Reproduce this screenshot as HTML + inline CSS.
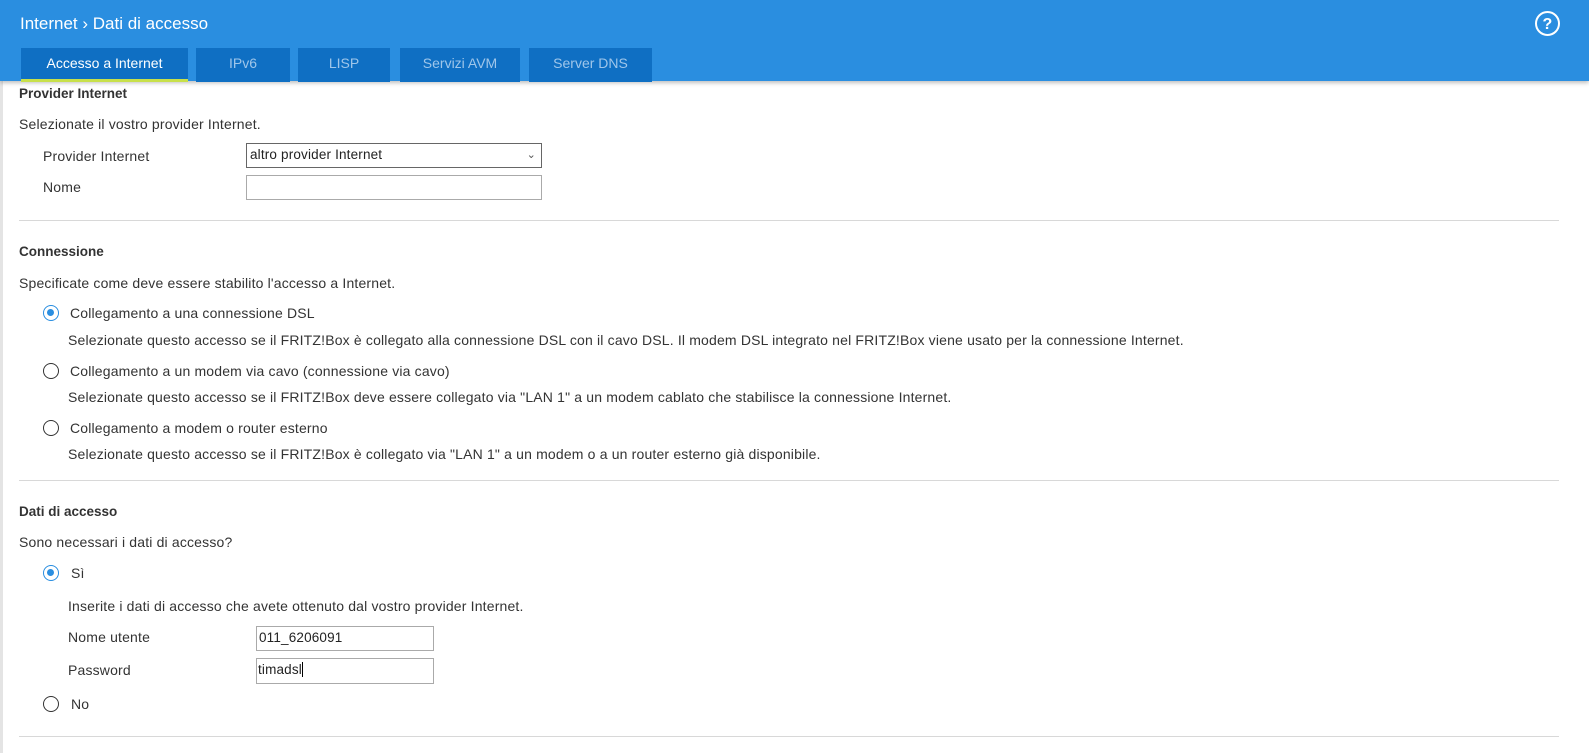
<!DOCTYPE html>
<html><head><meta charset="utf-8"><style>
body{margin:0;width:1589px;height:753px;overflow:hidden;background:#fff;font-family:"Liberation Sans",sans-serif;color:#333;font-size:14px;position:relative;letter-spacing:.17px}
.a{position:absolute;white-space:nowrap;line-height:16px}
.b{font-weight:bold;font-size:13.5px;letter-spacing:0}
.hdr{position:absolute;left:0;top:0;width:1589px;height:81px;background:#2a8ee0;box-shadow:0 2px 4px rgba(0,0,0,.25)}
.tab{position:absolute;top:48px;height:34px;background:#0f6fc3;color:#9fc6ea;font-size:14px;text-align:center;line-height:30px;letter-spacing:0}
.hr{position:absolute;left:19px;width:1540px;height:1px;background:#d8d8d8}
.in{position:absolute;border:1px solid #aaa;background:#fff;box-sizing:border-box;font-size:13.5px;line-height:22px;padding-left:3px;color:#222}
.r{position:absolute;width:16px;height:16px;border:1.5px solid #333;border-radius:50%;box-sizing:border-box;left:43px}
.r.on{border-color:#2a8ee0}
.r.on:after{content:"";position:absolute;left:3px;top:3px;width:7px;height:7px;border-radius:50%;background:#2a8ee0}
</style></head><body>
<div style="position:absolute;left:0;top:81px;width:3px;height:672px;background:#e4e4e4"></div>
<div class="hdr">
<div class="a" style="left:20px;top:14px;color:#fff;font-size:17px;line-height:20px;letter-spacing:0">Internet ›&nbsp;Dati di accesso</div>
<svg style="position:absolute;left:1534px;top:10px" width="27" height="27" viewBox="0 0 27 27"><circle cx="13.5" cy="13.5" r="11.5" fill="none" stroke="#fff" stroke-width="2"/><text x="13.5" y="19" text-anchor="middle" fill="#fff" font-family="Liberation Sans" font-weight="bold" font-size="16">?</text></svg>
<div class="tab" style="left:21px;width:167px;color:#fff">Accesso a Internet<div style="position:absolute;left:0;bottom:0;width:167px;height:3px;background:#c8e04a"></div></div>
<div class="tab" style="left:196px;width:94px">IPv6</div>
<div class="tab" style="left:298px;width:92px">LISP</div>
<div class="tab" style="left:400px;width:120px">Servizi AVM</div>
<div class="tab" style="left:529px;width:123px">Server DNS</div>
</div>
<div class="a b" style="left:19px;top:86px">Provider Internet</div>
<div class="a" style="left:19px;top:116px">Selezionate il vostro provider Internet.</div>
<div class="a" style="left:43px;top:148px">Provider Internet</div>
<div class="in" style="left:246px;top:143px;width:296px;height:25px;border-color:#666">altro provider Internet<span style="position:absolute;right:5px;top:0;font-size:11px;color:#555">⌄</span></div>
<div class="a" style="left:43px;top:179px">Nome</div>
<div class="in" style="left:246px;top:175px;width:296px;height:25px"></div>
<div class="hr" style="top:220px"></div>
<div class="a b" style="left:19px;top:244px">Connessione</div>
<div class="a" style="left:19px;top:275px">Specificate come deve essere stabilito l'accesso a Internet.</div>
<div class="r on" style="top:305px"></div>
<div class="a" style="left:70px;top:305px">Collegamento a una connessione DSL</div>
<div class="a" style="left:68px;top:332px">Selezionate questo accesso se il FRITZ!Box è collegato alla connessione DSL con il cavo DSL. Il modem DSL integrato nel FRITZ!Box viene usato per la connessione Internet.</div>
<div class="r" style="top:363px"></div>
<div class="a" style="left:70px;top:363px">Collegamento a un modem via cavo (connessione via cavo)</div>
<div class="a" style="left:68px;top:389px">Selezionate questo accesso se il FRITZ!Box deve essere collegato via "LAN 1" a un modem cablato che stabilisce la connessione Internet.</div>
<div class="r" style="top:420px"></div>
<div class="a" style="left:70px;top:420px">Collegamento a modem o router esterno</div>
<div class="a" style="left:68px;top:446px">Selezionate questo accesso se il FRITZ!Box è collegato via "LAN 1" a un modem o a un router esterno già disponibile.</div>
<div class="hr" style="top:480px"></div>
<div class="a b" style="left:19px;top:504px">Dati di accesso</div>
<div class="a" style="left:19px;top:534px">Sono necessari i dati di accesso?</div>
<div class="r on" style="top:565px"></div>
<div class="a" style="left:71px;top:565px">Sì</div>
<div class="a" style="left:68px;top:598px">Inserite i dati di accesso che avete ottenuto dal vostro provider Internet.</div>
<div class="a" style="left:68px;top:629px">Nome utente</div>
<div class="in" style="left:256px;top:626px;width:178px;height:25px;padding-left:2px">011_6206091</div>
<div class="a" style="left:68px;top:662px">Password</div>
<div class="in" style="left:256px;top:658px;width:178px;height:26px;padding-left:1px">timadsl<span style="border-left:1px solid #000"></span></div>
<div class="r" style="top:696px"></div>
<div class="a" style="left:71px;top:696px">No</div>
<div class="hr" style="top:736px"></div>
</body></html>
